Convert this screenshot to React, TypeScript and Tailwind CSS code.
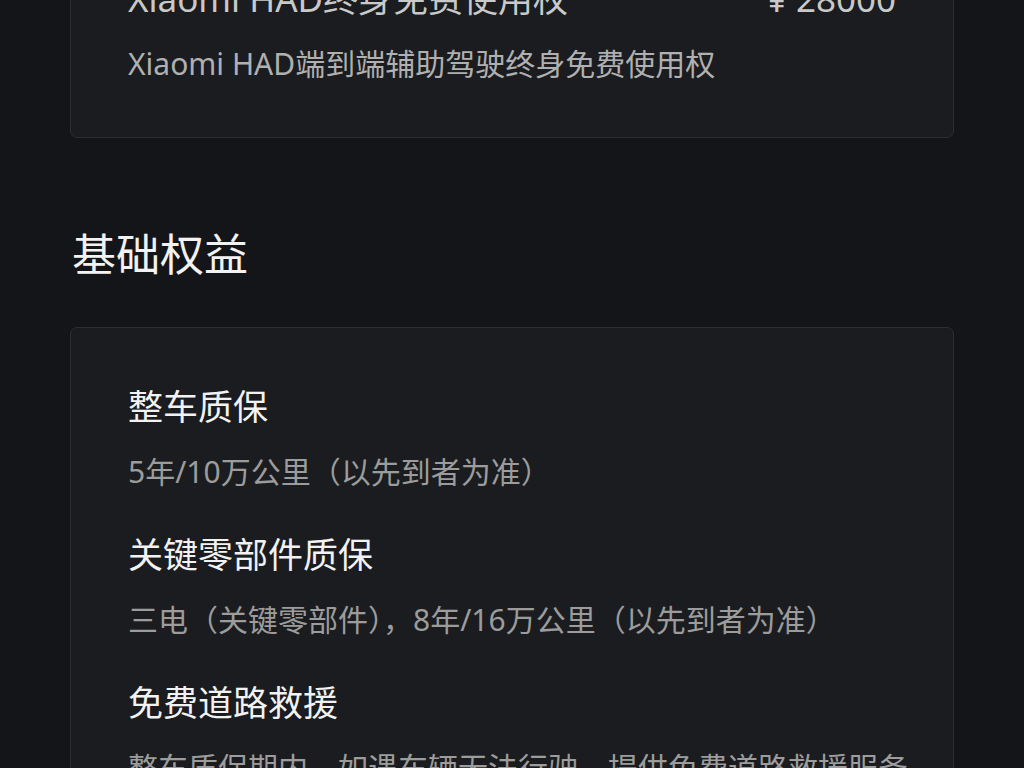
import React from 'react';

type Benefit = {
    title: string;
    desc: string;
};

const basicBenefits: Benefit[] = [
    { title: '整车质保', desc: '5年/10万公里（以先到者为准）' },
    { title: '关键零部件质保', desc: '三电（关键零部件），8年/16万公里（以先到者为准）' },
    { title: '免费道路救援', desc: '整车质保期内，如遇车辆无法行驶，提供免费道路救援服务' },
];

const font = { fontFamily: '"Noto Sans", "Noto Sans CJK SC", sans-serif' };

const App: React.FC = () => {
    return (
        <div className="min-h-screen w-full bg-[#141518] overflow-hidden" style={font}>
            <div className="px-[70px]">
                {/* 限时权益 (scrolled partly out of view) */}
                <div className="-mt-[82px] rounded-[7px] border border-[#2c2e32] bg-[#1a1c1f] px-[57px] pt-[56px] pb-[53px]">
                    <div className="flex items-center justify-between">
                        <span className="text-[35px] leading-[48px] text-[#c9c9c9]">
                            Xiaomi HAD终身免费使用权
                        </span>
                        <span className="text-[35px] leading-[48px] text-[#c9c9c9]">¥ 28000</span>
                    </div>
                    <p className="mt-[21px] text-[30px] leading-[40px] text-[#b0b0b0]">
                        Xiaomi HAD端到端辅助驾驶终身免费使用权
                    </p>
                </div>

                <h2 className="mt-[88px] mb-[45px] pl-[2px] text-[44px] leading-[56px] text-[#f2f2f2]">
                    基础权益
                </h2>

                <div className="rounded-[7px] border border-[#2c2e32] bg-[#1a1c1f] px-[57px] pt-[55px] pb-[54px]">
                    <div className="flex flex-col gap-[39px]">
                        {basicBenefits.map((b) => (
                            <div key={b.title} className="flex flex-col gap-[21px]">
                                <span className="text-[35px] leading-[48px] text-[#f2f2f2]">
                                    {b.title}
                                </span>
                                <span className="text-[30px] leading-[40px] text-[#9c9c9c] whitespace-nowrap">
                                    {b.desc}
                                </span>
                            </div>
                        ))}
                    </div>
                </div>
            </div>
        </div>
    );
};

export default App;
